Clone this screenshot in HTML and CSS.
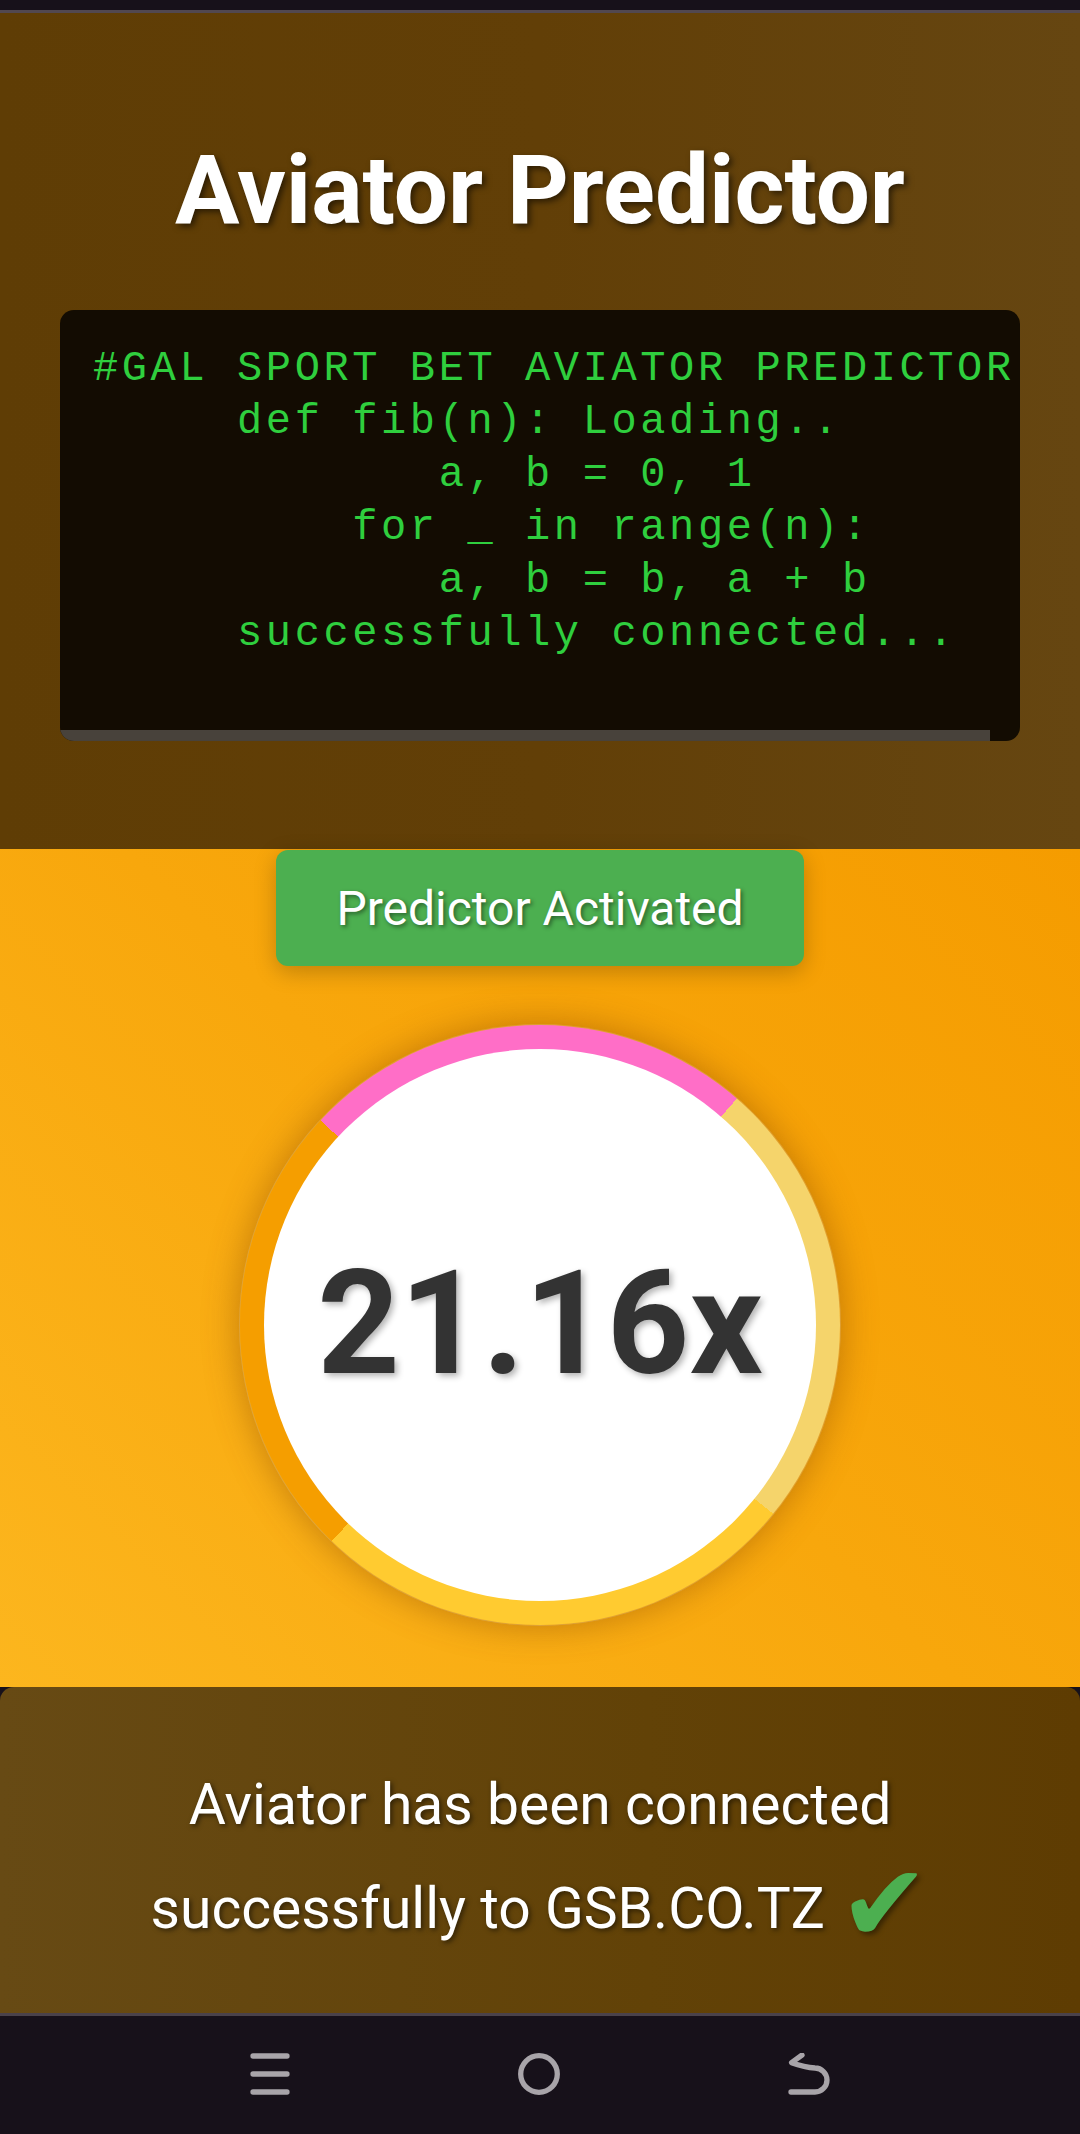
FILE: index.html
```html
<!DOCTYPE html>
<html lang="en">
<head>
<meta charset="utf-8">
<title>Aviator Predictor</title>
<link rel="stylesheet" href="styles.css">
</head>
<body>
<div class="statusbar"></div>
<header class="hero">
  <h1 class="title">Aviator Predictor</h1>
  <div class="code">
<pre class="code-text">#GAL SPORT BET AVIATOR PREDICTOR
     def fib(n): Loading..
            a, b = 0, 1
         for _ in range(n):
            a, b = b, a + b
     successfully connected...</pre>
  </div>
</header>
<main class="stage">
  <button class="activate" type="button">Predictor Activated</button>
  <div class="dial">
    <div class="face"><span class="mult">21.16x</span></div>
  </div>
</main>
<section class="status">
  <p class="status-text">Aviator has been connected<br>successfully to GSB.CO.TZ <span class="check">✔</span></p>
</section>
<nav class="navbar">
  <svg class="nav-icon" width="40" height="42" viewBox="0 0 40 42" aria-label="Recent apps">
    <line x1="3" y1="3" x2="37" y2="3"/>
    <line x1="3" y1="21" x2="37" y2="21"/>
    <line x1="3" y1="39" x2="37" y2="39"/>
  </svg>
  <svg class="nav-icon" width="42" height="42" viewBox="0 0 42 42" aria-label="Home">
    <circle cx="21" cy="21" r="18.3"/>
  </svg>
  <svg class="nav-icon" width="42" height="42" viewBox="0 0 42 42" aria-label="Back">
    <path d="M14 2 L3.6 9.7 C10 12 18 14.5 27 15 A12 12 0 0 1 27 39 L3 39"/>
  </svg>
</nav>
</body>
</html>
```
FILE: styles.css
```css
* { box-sizing: border-box; }
html, body { margin: 0; padding: 0; }
body {
  width: 1080px;
  height: 2134px;
  overflow: hidden;
  font-family: Roboto, "Noto Sans", "Liberation Sans", sans-serif;
  background: #17111a;
}
.statusbar {
  height: 13px;
  background: #17111a;
  border-bottom: 3px solid #524850;
}
.hero {
  height: 836px;
  padding: 118px 60px 108px;
  background: linear-gradient(90deg, #5f3d05 0%, #623f07 50%, #664611 100%);
}
.title {
  margin: 0 0 61px;
  font-size: 96px;
  line-height: 118px;
  font-weight: 700;
  color: #fff;
  text-align: center;
  text-shadow: 3px 3px 6px rgba(0, 0, 0, 0.55);
}
.code {
  position: relative;
  height: 431px;
  padding: 33px 33px 0;
  background: #130c02;
  border-radius: 14px;
  overflow: hidden;
}
.code::after {
  content: "";
  position: absolute;
  left: 0;
  bottom: 0;
  width: 930px;
  height: 11px;
  background: #48423b;
}
.code-text {
  margin: 0;
  font-family: "Liberation Mono", "DejaVu Sans Mono", monospace;
  font-size: 42px;
  letter-spacing: 3.6px;
  line-height: 53px;
  color: #2fcf3e;
  white-space: pre;
}
.stage {
  height: 838px;
  padding-top: 1px;
  display: flex;
  flex-direction: column;
  align-items: center;
  background: linear-gradient(45deg, #fcb61e 0%, #f8a70c 50%, #f59c00 100%);
}
.activate {
  width: 528px;
  height: 116px;
  border: 0;
  border-radius: 12px;
  background: #4caf50;
  color: #fff;
  font-family: Roboto, "Noto Sans", sans-serif;
  font-size: 48px;
  font-weight: 400;
  text-shadow: 2px 2px 4px rgba(0, 0, 0, 0.45);
  box-shadow: 0 6px 22px rgba(0, 0, 0, 0.22);
}
.dial {
  margin-top: 59px;
  width: 600px;
  height: 600px;
  padding: 24px;
  border-radius: 50%;
  background: conic-gradient(from -47deg, #ff6ec7 0deg 88deg, #f5d46b 88deg 176deg, #ffcb30 176deg 271deg, #f59e00 271deg 360deg);
  box-shadow: 0 0 36px rgba(120, 60, 0, 0.45), 0 0 0 1px rgba(255, 230, 170, 0.35);
}
.face {
  width: 100%;
  height: 100%;
  border-radius: 50%;
  background: #fff;
  display: flex;
  align-items: center;
  justify-content: center;
}
.mult {
  font-size: 144px;
  font-weight: 700;
  color: #333;
  line-height: 1;
  text-shadow: 3px 3px 6px rgba(0, 0, 0, 0.3);
  margin-top: -2px;
}
.status {
  height: 326px;
  padding-top: 66px;
  border-radius: 14px 14px 0 0;
  background: linear-gradient(90deg, #674a14 0%, #624207 60%, #5e3c02 100%);
}
.status-text {
  margin: 0;
  font-size: 57px;
  line-height: 104px;
  color: #fff;
  text-align: center;
  text-shadow: 2px 2px 5px rgba(0, 0, 0, 0.55);
}
.check {
  font-family: "DejaVu Sans", sans-serif;
  font-size: 108px;
  line-height: 0;
  color: #4caf50;
  vertical-align: -13px;
  text-shadow: 3px 3px 5px rgba(0, 0, 0, 0.4);
}
.navbar {
  height: 121px;
  border-top: 3px solid #4a424a;
  background: #17111a;
  display: flex;
  align-items: center;
  justify-content: space-between;
  padding: 0 250px 3px 250px;
}
.nav-icon {
  fill: none;
  stroke: #a8a4a9;
  stroke-width: 5.3;
  stroke-linecap: round;
  stroke-linejoin: round;
}
```
